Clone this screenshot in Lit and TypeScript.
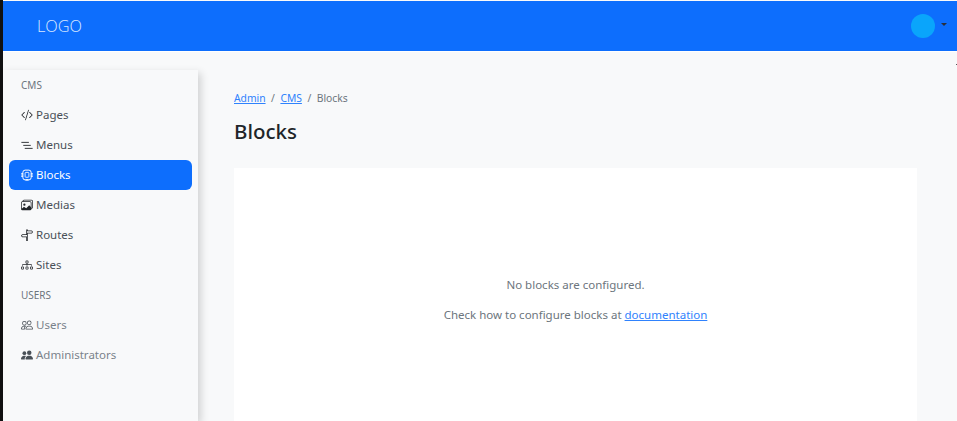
import { LitElement, html, css, svg } from "lit";
import { customElement } from "lit/decorators.js";

const icons: Record<string, unknown> = {
  pages: svg`<path fill="currentColor" d="M10.478 1.647a.5.5 0 1 0-.956-.294l-4 13a.5.5 0 0 0 .956.294l4-13zM4.854 4.146a.5.5 0 0 1 0 .708L1.707 8l3.147 3.146a.5.5 0 0 1-.708.708l-3.5-3.5a.5.5 0 0 1 0-.708l3.5-3.5a.5.5 0 0 1 .708 0zm6.292 0a.5.5 0 0 0 0 .708L14.293 8l-3.147 3.146a.5.5 0 0 0 .708.708l3.5-3.5a.5.5 0 0 0 0-.708l-3.5-3.5a.5.5 0 0 0-.708 0z"/>`,
  menus: svg`<path d="M.5 4.500h10M3 8.500h10M5 12.500h10.500" fill="none" stroke="currentColor" stroke-width="1.2"/>`,
  blocks: svg`<rect x="2.500" y="1.500" width="11" height="13" rx="3" fill="none" stroke="currentColor" stroke-width="1.300"/><rect x="5.500" y="4.500" width="5" height="6.500" rx="1" fill="none" stroke="currentColor" stroke-width="1.100"/><path d="M.2 6.500h2.500M.2 9.500h2.500M13.300 6.500h2.500M13.300 9.500h2.500M6 14.500h4" stroke="currentColor" stroke-width="1.500"/>`,
  medias: svg`<path fill="currentColor" d="M4.502 9a1.500 1.500 0 1 0 0-3 1.500 1.500 0 0 0 0 3z"/><path fill="currentColor" d="M14.002 13a2 2 0 0 1-2 2h-10a2 2 0 0 1-2-2V5A2 2 0 0 1 2 3a2 2 0 0 1 2-2h10a2 2 0 0 1 2 2v8a2 2 0 0 1-1.998 2zM14 2H4a1 1 0 0 0-1 1h9.002a2 2 0 0 1 2 2v7A1 1 0 0 0 15 11V3a1 1 0 0 0-1-1zM2.002 4a1 1 0 0 0-1 1v8l2.646-2.354a.5.5 0 0 1 .63-.062l2.660 1.773 3.710-3.710a.5.5 0 0 1 .577-.094l1.777 1.947V5a1 1 0 0 0-1-1h-10z"/>`,
  routes: svg`<path fill="currentColor" d="M7 7V1.414a1 1 0 0 1 2 0V2h5a1 1 0 0 1 .8.4l.975 1.300a.5.5 0 0 1 0 .6L14.800 5.600a1 1 0 0 1-.8.4H9v10H7v-5H2a1 1 0 0 1-.8-.4L.225 9.300a.5.5 0 0 1 0-.6L1.200 7.400A1 1 0 0 1 2 7h5zm1 3V8H2l-.750 1L2 10h6zm0-5h6l.750-1L14 3H8v2z"/>`,
  sites: svg`<path fill="currentColor" fill-rule="evenodd" d="M6 3.500A1.500 1.500 0 0 1 7.500 2h1A1.500 1.500 0 0 1 10 3.500v1A1.500 1.500 0 0 1 8.500 6v1H14a.5.5 0 0 1 .5.5v1a.5.5 0 0 1-1 0V8h-5v.5a.5.5 0 0 1-1 0V8h-5v.5a.5.5 0 0 1-1 0v-1A.5.5 0 0 1 2 7h5.500V6A1.500 1.500 0 0 1 6 4.500v-1zM8.500 5a.5.5 0 0 0 .5-.5v-1a.5.5 0 0 0-.5-.5h-1a.5.5 0 0 0-.5.500v1a.5.5 0 0 0 .5.5h1zM0 11.500A1.500 1.500 0 0 1 1.500 10h1A1.500 1.500 0 0 1 4 11.500v1A1.500 1.500 0 0 1 2.500 14h-1A1.500 1.500 0 0 1 0 12.500v-1zm1.500-.5a.5.5 0 0 0-.5.500v1a.5.5 0 0 0 .5.5h1a.5.5 0 0 0 .5-.5v-1a.5.5 0 0 0-.5-.5h-1zm4.500.5A1.500 1.500 0 0 1 7.500 10h1a1.500 1.500 0 0 1 1.500 1.500v1A1.500 1.500 0 0 1 8.500 14h-1A1.500 1.500 0 0 1 6 12.500v-1zm1.500-.5a.5.5 0 0 0-.5.500v1a.5.5 0 0 0 .5.5h1a.5.5 0 0 0 .5-.5v-1a.5.5 0 0 0-.5-.5h-1zm4.500.5a1.500 1.500 0 0 1 1.500-1.500h1a1.500 1.500 0 0 1 1.500 1.500v1a1.500 1.500 0 0 1-1.500 1.500h-1a1.500 1.500 0 0 1-1.500-1.500v-1zm1.500-.5a.5.5 0 0 0-.5.500v1a.5.5 0 0 0 .5.5h1a.5.5 0 0 0 .5-.5v-1a.5.5 0 0 0-.5-.5h-1z"/>`,
  users: svg`<path fill="currentColor" d="M15 14s1 0 1-1-1-4-5-4-5 3-5 4 1 1 1 1h8zm-7.978-1A.261.261 0 0 1 7 12.996c.001-.264.167-1.030.760-1.720C8.312 10.629 9.282 10 11 10c1.717 0 2.687.630 3.240 1.276.593.690.758 1.457.760 1.720l-.008.002a.274.274 0 0 1-.014.002H7.022zM11 7a2 2 0 1 0 0-4 2 2 0 0 0 0 4zm3-2a3 3 0 1 1-6 0 3 3 0 0 1 6 0zM6.936 9.280a5.880 5.880 0 0 0-1.230-.247A7.350 7.350 0 0 0 5 9c-4 0-5 3-5 4 0 .667.333 1 1 1h4.216A2.238 2.238 0 0 1 5 13c0-1.010.377-2.042 1.090-2.904.243-.294.526-.569.846-.816zM4.920 10A5.493 5.493 0 0 0 4 13H1c0-.260.164-1.030.760-1.724.545-.636 1.492-1.256 3.160-1.275zM1.500 5.500a3 3 0 1 1 6 0 3 3 0 0 1-6 0zm3-2a2 2 0 1 0 0 4 2 2 0 0 0 0-4z"/>`,
  admins: svg`<path fill="currentColor" d="M7 14s-1 0-1-1 1-4 5-4 5 3 5 4-1 1-1 1H7zm4-6a3 3 0 1 0 0-6 3 3 0 0 0 0 6z"/><path fill="currentColor" d="M5.216 14A2.238 2.238 0 0 1 5 13c0-1.355.680-2.750 1.936-3.720A6.325 6.325 0 0 0 5 9c-4 0-5 3-5 4s1 1 1 1h4.216z"/><path fill="currentColor" d="M4.500 8a2.500 2.500 0 1 0 0-5 2.500 2.500 0 0 0 0 5z"/>`,
};

type Row = { t: "h"; label: string } | { t: "i"; label: string; icon: string; active?: boolean; muted?: boolean };

const rows: Row[] = [
  { t: "h", label: "CMS" },
  { t: "i", label: "Pages", icon: "pages" },
  { t: "i", label: "Menus", icon: "menus" },
  { t: "i", label: "Blocks", icon: "blocks", active: true },
  { t: "i", label: "Medias", icon: "medias" },
  { t: "i", label: "Routes", icon: "routes" },
  { t: "i", label: "Sites", icon: "sites" },
  { t: "h", label: "USERS" },
  { t: "i", label: "Users", icon: "users", muted: true },
  { t: "i", label: "Administrators", icon: "admins", muted: true },
];

@customElement("app-root")
export class AppRoot extends LitElement {
  static styles = css`
    :host {
      display: block;
      height: 421px;
      overflow: hidden;
      background: #f8f9fa;
      font-family: "Noto Sans", "Open Sans", sans-serif;
      font-size: 12px;
      color: #6c757d;
    }
    .frame {
      display: flex;
      height: 421px;
    }
    .strip {
      width: 3px;
      flex: none;
      background: #111;
    }
    .main {
      flex: 1;
      min-width: 0;
      display: flex;
      flex-direction: column;
      position: relative;
    }
    .topline {
      height: 1px;
      background: #f8f9fa;
    }
    .bar {
      height: 50px;
      flex: none;
      background: #0d6efd;
      display: flex;
      align-items: center;
      justify-content: space-between;
      padding: 0 10px 0 34px;
      box-sizing: border-box;
    }
    .logo {
      font-size: 16.300px;
      font-weight: 300;
      color: #dbe9ff;
      font-family: "Open Sans", sans-serif;
    }
    .user {
      display: flex;
      align-items: center;
      gap: 6px;
    }
    .avatar {
      width: 24px;
      height: 24px;
      border-radius: 50%;
      background: #0aa5fb;
    }
    .caret {
      width: 0;
      height: 0;
      border: 3px solid transparent;
      border-top-color: #2a2f3a;
      border-bottom: 0;
      margin-bottom: 3px;
    }
    .gap {
      height: 1px;
      background: #fff;
      flex: none;
    }
    .body {
      flex: 1;
      display: flex;
      min-height: 0;
    }
    .side {
      width: 195px;
      flex: none;
      margin-top: 18px;
      padding: 0 6px;
      box-sizing: border-box;
      box-shadow: 3px 3px 8px rgba(0, 0, 0, 0.16);
      background: #f8f9fa;
    }
    .head {
      height: 30px;
      display: flex;
      align-items: center;
      padding-left: 12px;
      font-size: 10px;
      color: #6c757d;
    }
    .item {
      height: 30px;
      display: flex;
      align-items: center;
      gap: 3px;
      padding-left: 12px;
      color: #495057;
      border-radius: 6px;
      font-size: 11.500px;
    }
    .item span {
      padding-bottom: 2px;
    }
    .item svg {
      width: 12px;
      height: 12px;
      flex: none;
      color: #212529;
    }
    .item.muted {
      color: #7a828a;
    }
    .item.muted svg {
      color: #495057;
    }
    .item.active {
      background: #0d6efd;
      color: #fff;
    }
    .item.active svg {
      color: #fff;
    }
    .content {
      flex: 1;
      min-width: 0;
      padding: 38px 40px 0 36px;
      display: flex;
      flex-direction: column;
    }
    .crumbs {
      display: flex;
      gap: 5.500px;
      font-size: 10.300px;
      line-height: 16px;
      color: #6c757d;
    }
    a {
      color: #2f82fd;
      text-decoration: underline;
    }
    h1 {
      margin: 11px 0 0;
      font-size: 20.500px;
      font-weight: 500;
      line-height: 28px;
      color: #212529;
    }
    .card {
      margin-top: 23px;
      flex: 1;
      background: #fff;
      display: flex;
      flex-direction: column;
      align-items: center;
      padding-top: 108px;
      font-size: 11.500px;
      color: #6c757d;
    }
    .card p {
      margin: 0 0 13px;
      line-height: 17px;
    }
    .dot {
      position: absolute;
      right: 0;
      top: 64px;
      width: 1px;
      height: 1px;
      background: #555;
    }
  `;

  render() {
    return html`<div class="frame">
      <div class="strip"></div>
      <div class="main">
        <div class="topline"></div>
        <div class="bar">
          <span class="logo">LOGO</span>
          <span class="user"><span class="avatar"></span><span class="caret"></span></span>
        </div>
        <div class="gap"></div>
        <div class="body">
          <nav class="side">
            ${rows.map((r) =>
              r.t === "h"
                ? html`<div class="head">${r.label}</div>`
                : html`<div class="item ${r.active ? "active" : ""} ${r.muted ? "muted" : ""}">
                    <svg viewBox="0 0 16 16">${icons[r.icon]}</svg><span>${r.label}</span>
                  </div>`
            )}
          </nav>
          <div class="content">
            <div class="crumbs"><a>Admin</a><span>/</span><a>CMS</a><span>/</span><span>Blocks</span></div>
            <h1>Blocks</h1>
            <div class="card">
              <p>No blocks are configured.</p>
              <p>Check how to configure blocks at <a>documentation</a></p>
            </div>
          </div>
        </div>
        <div class="dot"></div>
      </div>
    </div>`;
  }
}
